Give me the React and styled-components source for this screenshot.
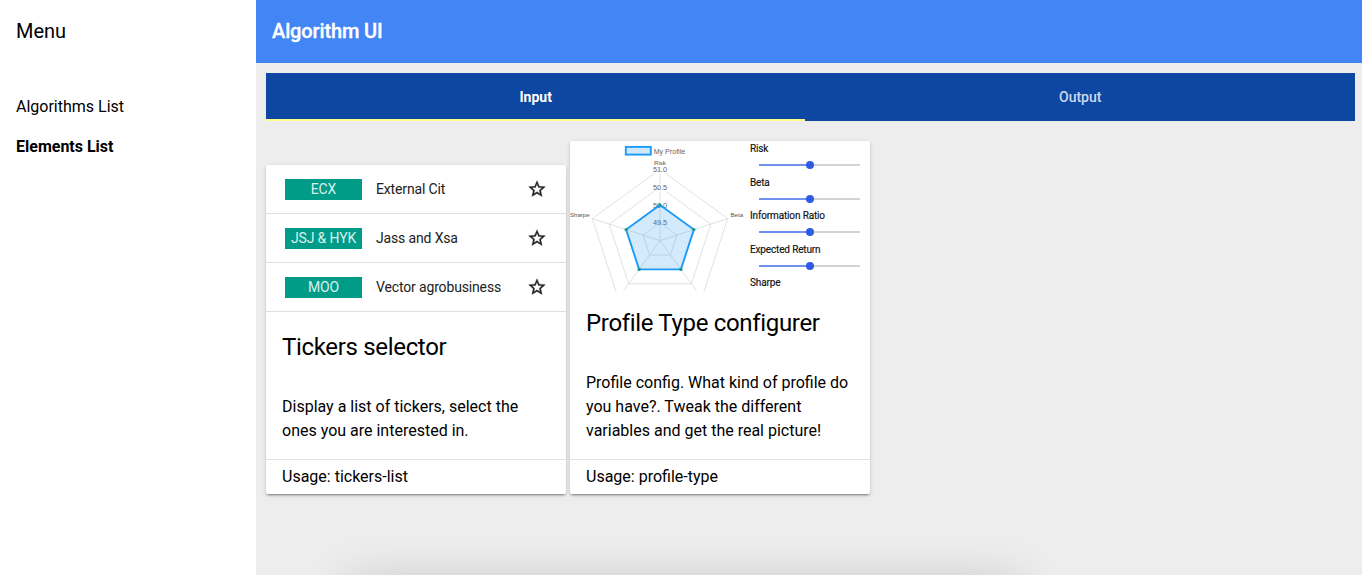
import React from "react";
import styled, { createGlobalStyle } from "styled-components";

const GlobalStyle = createGlobalStyle`
  *, *::before, *::after { box-sizing: border-box; }
  body { margin: 0; font-family: Roboto, "Noto Sans", sans-serif; font-size: 16px; color: #000; }
`;

const Layout = styled.div`
  position: relative;
  display: flex;
  height: 100vh;
  overflow: hidden;
  background: #ededed;
`;

const Drawer = styled.aside`
  flex: 0 0 256px;
  background: #fff;
`;

const DrawerTitle = styled.div`
  height: 64px;
  padding: 0 16px 2px;
  display: flex;
  align-items: center;
  font-size: 20px;
`;

const Nav = styled.nav`
  display: flex;
  flex-direction: column;
  padding-top: 23px;
`;

const NavLink = styled.a`
  padding: 0 16px;
  line-height: 40px;
  font-weight: ${(p) => (p.$active ? 700 : 400)};
`;

const Main = styled.main`
  flex: 1;
  min-width: 0;
`;

const Header = styled.header`
  height: 63px;
  padding: 0 16px 1px;
  display: flex;
  align-items: center;
  background: #4285f4;
  color: #fff;
  font-size: 20px;
  font-weight: 500;
  letter-spacing: -0.13px;
  -webkit-text-stroke: 0.35px #fff;
`;

const Content = styled.div`
  padding: 10px 7px 0 10px;
`;

const Tabs = styled.div`
  display: grid;
  grid-template-columns: 539.4px 1fr;
  height: 48px;
  background: #0d47a1;
`;

const Tab = styled.div`
  display: flex;
  align-items: center;
  justify-content: center;
  padding-top: ${(p) => (p.$active ? 2 : 0)}px;
  border-bottom: ${(p) => (p.$active ? "2px solid #ffff8d" : "0")};
  color: ${(p) => (p.$active ? "#fff" : "rgba(255,255,255,0.8)")};
  font-size: 14px;
  font-weight: ${(p) => (p.$active ? 700 : 500)};
`;

const Cards = styled.div`
  display: flex;
  align-items: flex-end;
  gap: 4px;
  padding-top: 20px;
`;

const Card = styled.article`
  width: 300px;
  background: #fff;
  border-radius: 2px;
  box-shadow: 0 2px 2px 0 rgba(0, 0, 0, 0.14), 0 1px 5px 0 rgba(0, 0, 0, 0.12),
    0 3px 1px -2px rgba(0, 0, 0, 0.2);
`;

const Preview = styled.div`
  display: flex;
  flex-direction: ${(p) => p.$direction || "row"};
  height: 150px;
  overflow: hidden;
`;

const CardTitle = styled.h2`
  margin: 0;
  padding: 16px;
  font-size: 24px;
  font-weight: 400;
  line-height: 32px;
  letter-spacing: -0.0135em;
`;

const CardText = styled.p`
  margin: 0;
  padding: 16px;
  line-height: 24px;
`;

const CardUsage = styled.div`
  padding: 5px 16px;
  border-top: 1px solid #e3e3e3;
  line-height: 24px;
`;

const TickerRow = styled.div`
  flex: 0 0 49px;
  display: flex;
  align-items: center;
  padding: 0 19px;
  border-bottom: 1px solid #e0e0e0;
  font-size: 14px;
  letter-spacing: -0.15px;
  color: #212121;
`;

const TickerBadge = styled.span`
  width: 77px;
  height: 21px;
  margin-right: 14px;
  background: #009c88;
  color: #d9f1ee;
  line-height: 20px;
  text-align: center;
`;

const TickerName = styled.span`
  flex: 1;
`;

const Star = styled.svg`
  display: block;
  width: 20px;
  height: 20px;
  fill: #212121;
  stroke: #212121;
  stroke-width: 0.4;
`;

const Radar = styled.svg`
  flex: 0 0 180px;
  height: 150px;
  font-family: "Liberation Sans", Arial, sans-serif;
`;

const Sliders = styled.div`
  flex: 1;
`;

const Slider = styled.div`
  height: 33.6px;
  font-size: 10px;
  letter-spacing: -0.15px;
  line-height: 15px;
  color: #111;
  -webkit-text-stroke: 0.15px #111;
`;

const SliderTrack = styled.div`
  display: flex;
  align-items: center;
  width: 101px;
  height: 8px;
  margin: 5px 0 0 9px;
  background: linear-gradient(90deg, #7191f0 50%, #d3d3d3 50%) center / 100% 2px no-repeat;
`;

const SliderKnob = styled.span`
  width: 8px;
  height: 8px;
  margin-left: 47px;
  border-radius: 50%;
  background: #2e5be3;
`;

const DockShadow = styled.div`
  position: absolute;
  left: 346px;
  top: 581px;
  width: 674px;
  height: 60px;
  box-shadow: 0 0 46px rgba(0, 0, 0, 0.17);
`;

const tickers = [
  ["ECX", "External Cit"],
  ["JSJ & HYK", "Jass and Xsa"],
  ["MOO", "Vector agrobusiness"],
];

const CX = 90;
const CY = 99.6;

function corners(radius) {
  return [0, 1, 2, 3, 4].map((i) => {
    const angle = (i * 2 * Math.PI) / 5;
    return [CX + radius * Math.sin(angle), CY - radius * Math.cos(angle)];
  });
}

const toPoints = (list) => list.map((c) => c.join(",")).join(" ");

function RadarChart() {
  return (
    <Radar viewBox="0 0 180 150">
      <g fill="none" stroke="#dedede" strokeWidth="0.9">
        {[17.8, 53.4, 71.2].map((r) => (
          <polygon key={r} points={toPoints(corners(r))} />
        ))}
        {corners(71.2).map(([x, y]) => (
          <line key={x} x1={CX} y1={CY} x2={x} y2={y} />
        ))}
      </g>
      <g fill="#fff" fillOpacity="0.75">
        <rect x="82" y="24.5" width="16" height="8" />
        <rect x="82" y="42.5" width="16" height="8" />
      </g>
      <g fill="#666" fontSize="7.3" textAnchor="middle">
        <text x="90" y="31">51.0</text>
        <text x="90" y="48.8">50.5</text>
        <text x="90" y="66.6">50.0</text>
        <text x="90" y="84.4">49.5</text>
      </g>
      <g fill="#555" fontSize="6.1">
        <text x="90" y="24" textAnchor="middle">Risk</text>
        <text x="0" y="75.6">Sharpe</text>
        <text x="160.5" y="75.6">Beta</text>
      </g>
      <polygon
        points={toPoints(corners(35.6))}
        fill="rgba(33,150,243,0.2)"
        stroke="#1b9af7"
        strokeWidth="1.9"
      />
      {corners(35.6).map(([x, y]) => (
        <circle key={x} cx={x} cy={y} r="1.6" fill="#109c8c" />
      ))}
      <rect x="55.8" y="5.9" width="25" height="7.7" fill="#d1e8fc" stroke="#1b9af7" strokeWidth="1.9" />
      <text x="83.7" y="12.6" fontSize="7.1" fill="#666">My Profile</text>
    </Radar>
  );
}

export default function App() {
  return (
    <Layout>
      <GlobalStyle />
      <Drawer>
        <DrawerTitle>Menu</DrawerTitle>
        <Nav>
          <NavLink>Algorithms List</NavLink>
          <NavLink $active>Elements List</NavLink>
        </Nav>
      </Drawer>
      <Main>
        <Header>Algorithm UI</Header>
        <Content>
          <Tabs>
            <Tab $active>Input</Tab>
            <Tab>Output</Tab>
          </Tabs>
          <Cards>
            <Card>
              <Preview $direction="column">
                {tickers.map(([code, name]) => (
                  <TickerRow key={code}>
                    <TickerBadge>{code}</TickerBadge>
                    <TickerName>{name}</TickerName>
                    <Star viewBox="0 0 24 24">
                      <path d="M22 9.24l-7.19-.62L12 2 9.19 8.63 2 9.24l5.46 4.73L5.82 21 12 17.27 18.18 21l-1.63-7.03L22 9.24zM12 15.4l-3.76 2.27 1-4.28-3.32-2.88 4.38-.38L12 6.1l1.71 4.04 4.38.38-3.32 2.88 1 4.28L12 15.4z" />
                    </Star>
                  </TickerRow>
                ))}
              </Preview>
              <CardTitle>Tickers selector</CardTitle>
              <CardText>Display a list of tickers, select the ones you are interested in.</CardText>
              <CardUsage>Usage: tickers-list</CardUsage>
            </Card>
            <Card>
              <Preview>
                <RadarChart />
                <Sliders>
                  {["Risk", "Beta", "Information Ratio", "Expected Return", "Sharpe"].map((label) => (
                    <Slider key={label}>
                      {label}
                      <SliderTrack>
                        <SliderKnob />
                      </SliderTrack>
                    </Slider>
                  ))}
                </Sliders>
              </Preview>
              <CardTitle>Profile Type configurer</CardTitle>
              <CardText>
                Profile config. What kind of profile do you have?. Tweak the different variables and get
                the real picture!
              </CardText>
              <CardUsage>Usage: profile-type</CardUsage>
            </Card>
          </Cards>
        </Content>
      </Main>
      <DockShadow />
    </Layout>
  );
}
